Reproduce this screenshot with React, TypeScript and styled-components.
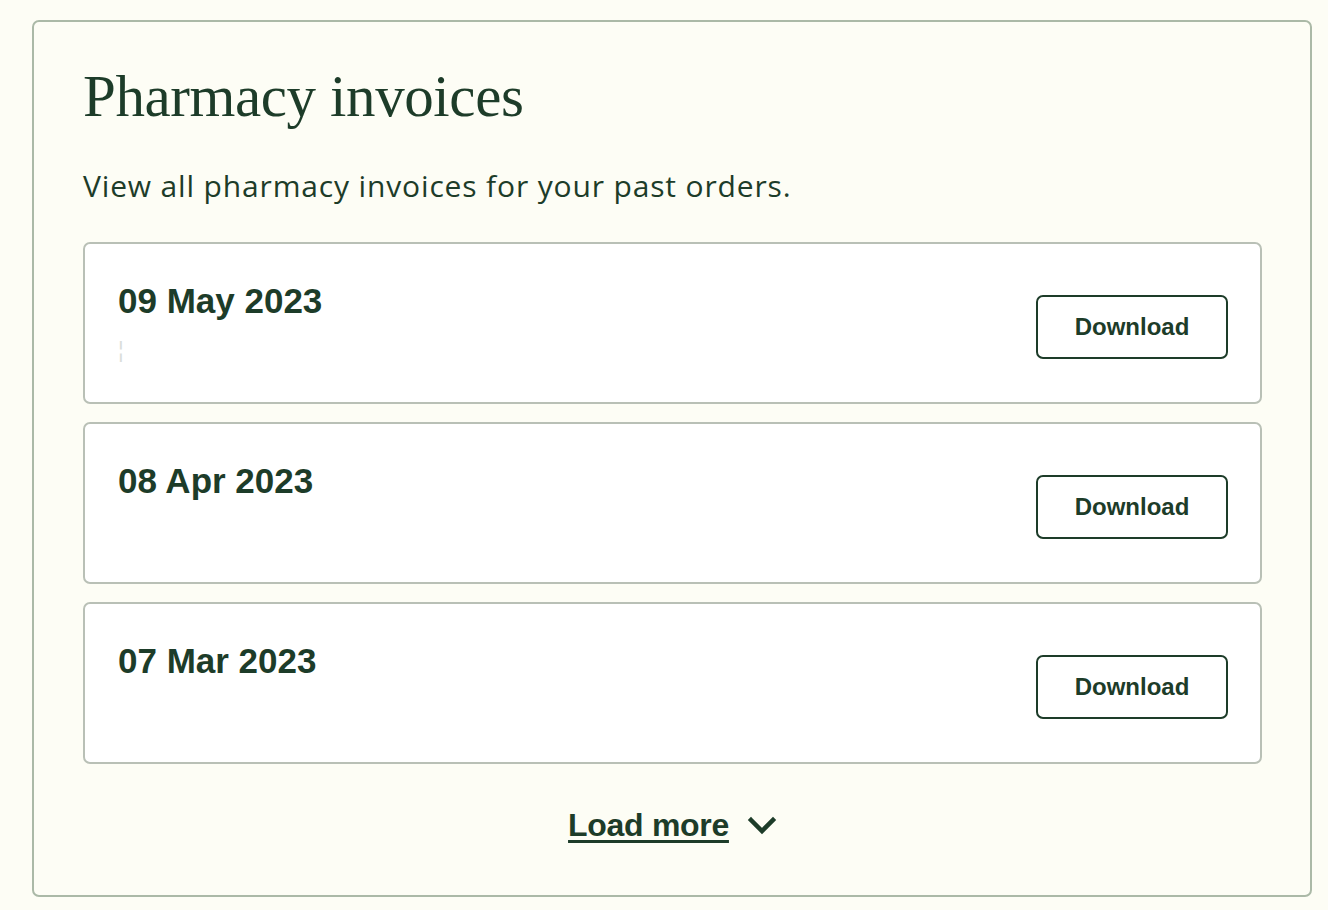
import styled, { createGlobalStyle } from "styled-components";

interface Invoice {
  id: string;
  date: string;
  note?: string;
}

const invoices: Invoice[] = [
  { id: "inv-0523", date: "09 May 2023", note: "¦" },
  { id: "inv-0423", date: "08 Apr 2023" },
  { id: "inv-0323", date: "07 Mar 2023" },
];

const GlobalStyle = createGlobalStyle`
  html, body {
    margin: 0;
    background: #fdfdf5;
    color: #1d3c29;
    font-family: "Liberation Sans", Arial, sans-serif;
  }
`;

const Page = styled.div`
  padding: 20px 16px 14px 32px;
`;

const Card = styled.section`
  border: 2px solid #abb9a7;
  border-radius: 7px;
  padding: 34px 48px 48px 49px;
  display: flex;
  flex-direction: column;
`;

const Title = styled.h1`
  margin: 0;
  font-family: "Liberation Serif", "DejaVu Serif", serif;
  font-weight: 400;
  font-size: 59px;
  line-height: 80px;
  letter-spacing: -0.4px;
`;

const Intro = styled.p`
  margin: 29px 0 35px;
  font-family: "Open Sans", "Noto Sans", sans-serif;
  font-size: 30px;
  line-height: 42px;
  letter-spacing: 0.85px;
`;

const List = styled.ul`
  list-style: none;
  margin: 0;
  padding: 0;
  display: flex;
  flex-direction: column;
  gap: 18px;
`;

const Row = styled.li`
  height: 162px;
  box-sizing: border-box;
  background: #ffffff;
  border: 2px solid #b9c0b6;
  border-radius: 7px;
  padding: 35px 32px 0 33px;
  display: flex;
  justify-content: space-between;
  align-items: flex-start;
`;

const Info = styled.div`
  display: flex;
  flex-direction: column;
`;

const DateText = styled.span`
  font-weight: 700;
  font-size: 35px;
  line-height: 44px;
`;

const Note = styled.span`
  margin-top: 12px;
  font-size: 22px;
  line-height: 30px;
  color: #dadeda;
`;

const DownloadButton = styled.button`
  margin-top: 16px;
  width: 192px;
  height: 64px;
  background: transparent;
  border: 2px solid #1d3c29;
  border-radius: 7px;
  color: #1d3c29;
  font-family: "Liberation Sans", Arial, sans-serif;
  font-weight: 700;
  font-size: 24px;
  cursor: pointer;
`;

const LoadMore = styled.button`
  align-self: center;
  margin-top: 39px;
  display: flex;
  align-items: center;
  gap: 18px;
  background: none;
  border: none;
  padding: 0;
  color: #1d3c29;
  font-family: "Liberation Sans", Arial, sans-serif;
  font-weight: 700;
  font-size: 32px;
  line-height: 44px;
  letter-spacing: -0.3px;
  cursor: pointer;

  span {
    text-decoration: underline;
    text-decoration-thickness: 3px;
    text-underline-offset: 4px;
  }
`;

function Chevron() {
  return (
    <svg width="30" height="20" viewBox="0 0 30 20" fill="none">
      <path
        d="M4 5l11 11L26 5"
        stroke="#1d3c29"
        strokeWidth="4.5"
        strokeLinecap="square"
      />
    </svg>
  );
}

function App() {
  return (
    <Page>
      <GlobalStyle />
      <Card>
        <Title>Pharmacy invoices</Title>
        <Intro>View all pharmacy invoices for your past orders.</Intro>
        <List>
          {invoices.map((invoice) => (
            <Row key={invoice.id}>
              <Info>
                <DateText>{invoice.date}</DateText>
                {invoice.note && <Note>{invoice.note}</Note>}
              </Info>
              <DownloadButton>Download</DownloadButton>
            </Row>
          ))}
        </List>
        <LoadMore>
          <span>Load more</span>
          <Chevron />
        </LoadMore>
      </Card>
    </Page>
  );
}

export default App;
